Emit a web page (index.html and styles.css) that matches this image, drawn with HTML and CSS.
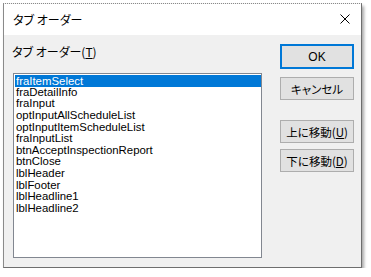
FILE: index.html
```html
<!DOCTYPE html>
<html lang="ja">
<head>
    <meta charset="UTF-8">
    <title>タブ オーダー</title>
    <link rel="stylesheet" href="styles.css">
</head>
<body>
    <div class="dialog">
        <div class="title-bar">
            <span class="title">タブ オーダー</span>
            <svg class="close-icon" width="10" height="10" viewBox="0 0 10 10">
                <path d="M0.5 0.5 L9.5 9.5 M9.5 0.5 L0.5 9.5" stroke="#000" stroke-width="1" fill="none"/>
            </svg>
        </div>

        <div class="dialog-body">
            <div class="left-column">
                <div class="caption">タブ オーダー(<u>T</u>)</div>
                <div class="list-box">
                    <div class="list-item selected">fraItemSelect</div>
                    <div class="list-item">fraDetailInfo</div>
                    <div class="list-item">fraInput</div>
                    <div class="list-item">optInputAllScheduleList</div>
                    <div class="list-item">optInputItemScheduleList</div>
                    <div class="list-item">fraInputList</div>
                    <div class="list-item">btnAcceptInspectionReport</div>
                    <div class="list-item">btnClose</div>
                    <div class="list-item">lblHeader</div>
                    <div class="list-item">lblFooter</div>
                    <div class="list-item">lblHeadline1</div>
                    <div class="list-item">lblHeadline2</div>
                </div>
            </div>

            <div class="button-column">
                <button class="dlg-button default-button">OK</button>
                <button class="dlg-button cancel-button">キャンセル</button>
                <button class="dlg-button up-button">上に移動(<u>U</u>)</button>
                <button class="dlg-button down-button">下に移動(<u>D</u>)</button>
            </div>
        </div>
    </div>
</body>
</html>
```

FILE: styles.css
```css
body {
    margin: 0;
    background-color: #fff;
    font-family: "Liberation Sans", "Noto Sans CJK JP", sans-serif;
    color: #000;
}

.dialog {
    margin: 3px 0 0 3px;
    width: 357px;
    height: 263px;
    background-color: #f0f0f0;
    border-top: 1px dotted #8a8a8a;
    border-left: 1px solid #8a8a8a;
    border-right: 1px solid #6e6e6e;
    border-bottom: 1px solid #6e6e6e;
    box-shadow: 2px 3px 3px rgba(0,0,0,0.35);
    display: flex;
    flex-direction: column;
}

.title-bar {
    height: 31px;
    background-color: #fff;
    display: flex;
    align-items: center;
    justify-content: space-between;
    padding: 0 11px 0 9px;
}

.title {
    font-family: "Noto Sans CJK JP", sans-serif;
    font-feature-settings: "palt";
    font-size: 12px;
    margin-top: -1px;
}

.close-icon {
    display: block;
    margin-top: -1px;
}

.dialog-body {
    display: flex;
    padding: 9px 0 0 9px;
}

.left-column {
    display: flex;
    flex-direction: column;
}

.caption {
    font-family: "Noto Sans CJK JP", sans-serif;
    font-feature-settings: "palt";
    font-size: 12px;
    line-height: 14px;
    margin: 1px 0 14px -1px;
}

.caption u,
.dlg-button u {
    text-underline-offset: 1px;
}

.list-box {
    width: 246px;
    height: 182px;
    background-color: #fff;
    border: 1px solid #828790;
    padding: 1px 0 0 1px;
    box-sizing: content-box;
}

.list-item {
    height: 11.64px;
    line-height: 11.64px;
    font-size: 11.4px;
    padding-left: 1px;
    white-space: nowrap;
}

.list-item.selected {
    background-color: #0078d7;
    color: #fff;
    height: 12px;
    line-height: 12px;
    margin-bottom: -0.36px;
}

.button-column {
    display: flex;
    flex-direction: column;
    margin-left: 18px;
}

.dlg-button {
    width: 74px;
    height: 23px;
    padding: 0;
    background-color: #e1e1e1;
    border: 1px solid #adadad;
    font-family: "Noto Sans CJK JP", sans-serif;
    font-feature-settings: "palt";
    font-size: 11.5px;
    color: #000;
}

.default-button {
    height: 25px;
    border: 2px solid #0078d7;
    font-family: "Liberation Sans", sans-serif;
    font-size: 12px;
}

.cancel-button {
    margin-top: 8px;
}

.up-button {
    margin-top: 20px;
}

.down-button {
    margin-top: 6px;
}
```
